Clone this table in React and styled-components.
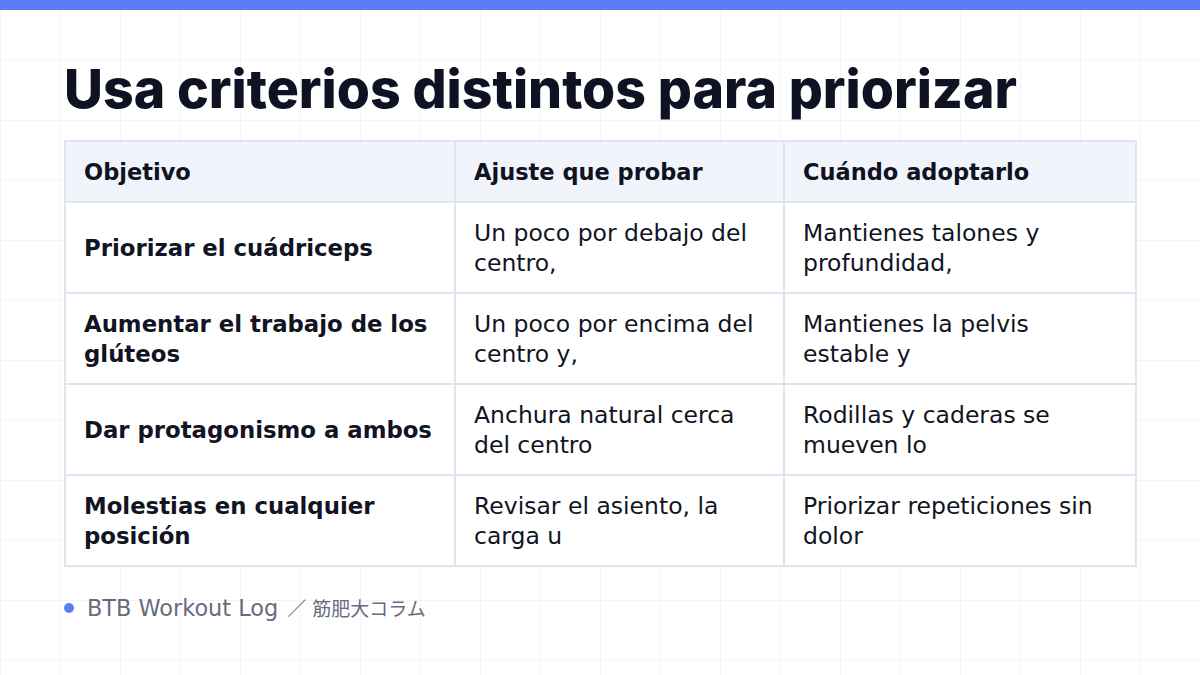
import React from 'react';
import styled, { createGlobalStyle } from 'styled-components';

const GlobalStyle = createGlobalStyle`
    html, body {
        margin: 0;
        padding: 0;
    }
    body {
        font-family: "DejaVu Sans", "Noto Sans CJK JP", sans-serif;
        color: #0f1222;
        background: #ffffff;
    }
`;

const Slide = styled.section`
    width: 1200px;
    height: 675px;
    box-sizing: border-box;
    overflow: hidden;
    border-top: 10px solid #5b7cf6;
    background-color: #ffffff;
    background-image:
        linear-gradient(to right, #f3f4f7 1px, transparent 1px),
        linear-gradient(to bottom, #f3f4f7 1px, transparent 1px);
    background-size: 60px 60px;
    background-position: 0 -10px;
    padding: 48px 64px 0 64px;
    display: flex;
    flex-direction: column;
`;

const Title = styled.h1`
    margin: 0;
    font-family: Inter, "Noto Sans CJK JP", sans-serif;
    font-size: 53.6px;
    font-weight: 800;
    line-height: 62px;
    color: #0f1222;
`;

const Table = styled.table`
    margin-top: 20px;
    width: 1071px;
    border-collapse: collapse;
    table-layout: fixed;
    background: #ffffff;
    border: 2px solid #dfe4f1;
`;

const Col = styled.col`
    width: ${p => p.$w}px;
`;

const HeadCell = styled.th`
    text-align: left;
    font-size: 22.5px;
    font-weight: 700;
    height: 59px;
    padding: 0 18px;
    background: #f2f4fb;
    border: 2px solid #dfe4f1;
`;

const Cell = styled.td`
    font-size: ${p => (p.$strong ? '22.8px' : '23.5px')};
    line-height: 30px;
    font-weight: ${p => (p.$strong ? 700 : 400)};
    padding: 14.5px 18px;
    height: 59px;
    vertical-align: middle;
    border: 2px solid #dfe4f1;
    color: #111423;
`;

const Footer = styled.div`
    margin-top: 27px;
    display: flex;
    align-items: center;
    gap: 6px;
    color: #666c7b;
`;

const Dot = styled.span`
    width: 10px;
    height: 10px;
    margin-right: 7px;
    border-radius: 50%;
    background: #5b7cf6;
`;

const Brand = styled.span`
    font-size: 22.4px;
    margin-right: 3px;
`;

const Column = styled.span`
    font-family: "Noto Sans CJK JP", sans-serif;
    font-size: 19px;
`;

const rows = [
    ['Priorizar el cuádriceps', 'Un poco por debajo del centro,', 'Mantienes talones y profundidad,'],
    ['Aumentar el trabajo de los glúteos', 'Un poco por encima del centro y,', 'Mantienes la pelvis estable y'],
    ['Dar protagonismo a ambos', 'Anchura natural cerca del centro', 'Rodillas y caderas se mueven lo'],
    ['Molestias en cualquier posición', 'Revisar el asiento, la carga u', 'Priorizar repeticiones sin dolor'],
];

export default function App() {
    return (
        <>
            <GlobalStyle />
            <Slide>
                <Title>Usa criterios distintos para priorizar</Title>
                <Table>
                    <colgroup>
                        <Col $w={390} />
                        <Col $w={329} />
                        <Col $w={352} />
                    </colgroup>
                    <thead>
                        <tr>
                            <HeadCell>Objetivo</HeadCell>
                            <HeadCell>Ajuste que probar</HeadCell>
                            <HeadCell>Cuándo adoptarlo</HeadCell>
                        </tr>
                    </thead>
                    <tbody>
                        {rows.map(r => (
                            <tr key={r[0]}>
                                <Cell $strong>{r[0]}</Cell>
                                <Cell>{r[1]}</Cell>
                                <Cell>{r[2]}</Cell>
                            </tr>
                        ))}
                    </tbody>
                </Table>
                <Footer>
                    <Dot />
                    <Brand>BTB Workout Log</Brand>
                    <Column>／</Column>
                    <Column>筋肥大コラム</Column>
                </Footer>
            </Slide>
        </>
    );
}
